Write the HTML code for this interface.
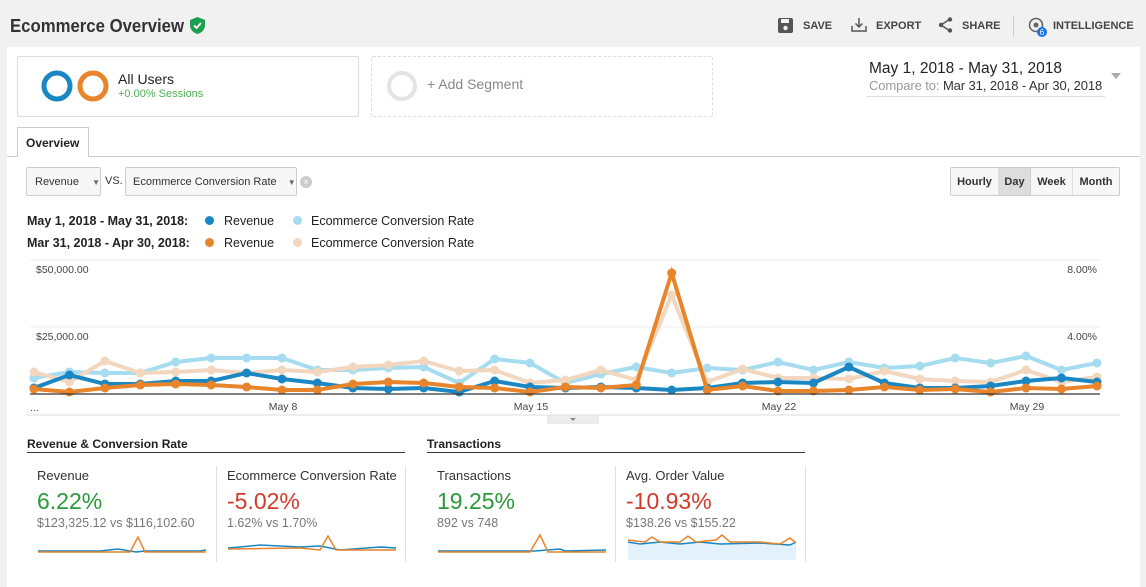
<!DOCTYPE html>
<html><head><meta charset="utf-8"><style>
*{margin:0;padding:0;box-sizing:border-box}
body{width:1146px;height:578px;overflow:hidden;background:#f1f1f1;font-family:"Liberation Sans",Arial,sans-serif;color:#222;position:relative}
.a{position:absolute;white-space:nowrap}
.panel{position:absolute;left:7px;top:47px;width:1133px;height:540px;background:#fff}
.btn{position:absolute;border:1px solid #ccc;background:#f7f7f7;border-radius:2px;font-size:11px;color:#333}
.mv{font-size:13px;color:#333}
.big{font-size:23px}
.sub{font-size:12.5px;color:#777}
</style></head><body>
<div class="a" style="left:10px;top:16px;font-size:18px;font-weight:bold;color:#333;transform:scaleX(0.93);transform-origin:0 0">Ecommerce Overview</div>
<svg class="a" style="left:190px;top:17px" width="15" height="17" viewBox="0 0 15 17"><path d="M7.5 0L15 3v5c0 4.5-3.2 8-7.5 9C3.2 16 0 12.5 0 8V3z" fill="#1e9e50"/><path d="M4 8.5l2.5 2.5 4.5-5" stroke="#fff" stroke-width="1.8" fill="none"/></svg>
<svg class="a" style="left:778px;top:18px" width="15" height="15"><rect x="0" y="0" width="15" height="15" rx="2" fill="#555"/><rect x="3" y="1" width="8" height="4" fill="#f1f1f1"/><circle cx="7.5" cy="10" r="2.2" fill="#f1f1f1"/></svg>
<div class="a" style="left:803px;top:20px;font-size:11px;font-weight:bold;color:#444">SAVE</div>
<svg class="a" style="left:851px;top:17px" width="16" height="16" fill="none" stroke="#555" stroke-width="1.5"><path d="M8 1v9M4.5 6.5L8 10l3.5-3.5M1 9v5h14V9"/></svg>
<div class="a" style="left:876px;top:20px;font-size:11px;font-weight:bold;color:#444">EXPORT</div>
<svg class="a" style="left:938px;top:17px" width="15" height="16"><path d="M12 2L3 8l9 6" stroke="#555" stroke-width="1.5" fill="none"/><circle cx="12" cy="2.5" r="2.2" fill="#555"/><circle cx="3" cy="8" r="2.2" fill="#555"/><circle cx="12" cy="13.5" r="2.2" fill="#555"/></svg>
<div class="a" style="left:962px;top:20px;font-size:11px;font-weight:bold;color:#444">SHARE</div>
<div class="a" style="left:1013px;top:16px;width:1px;height:20px;background:#ccc"></div>
<svg class="a" style="left:1027px;top:16px" width="22" height="22"><circle cx="9" cy="9" r="6.5" stroke="#666" stroke-width="1.6" fill="none"/><circle cx="9" cy="9" r="2.5" fill="#666"/><circle cx="15" cy="16" r="5" fill="#1a73e8"/><text x="15" y="19" font-size="8" fill="#fff" text-anchor="middle" font-family="Liberation Sans">6</text></svg>
<div class="a" style="left:1053px;top:20px;font-size:11px;font-weight:bold;color:#444">INTELLIGENCE</div>

<div class="panel"></div>
<div class="a" style="left:17px;top:56px;width:342px;height:61px;border:1px solid #ddd;border-radius:2px"></div>
<svg class="a" style="left:40px;top:69px" width="70" height="34"><circle cx="17" cy="17" r="13" stroke="#1a87c2" stroke-width="5" fill="none"/><circle cx="53" cy="17" r="13" stroke="#e8842a" stroke-width="5" fill="none"/></svg>
<div class="a" style="left:118px;top:71px;font-size:14px;color:#222">All Users</div>
<div class="a" style="left:118px;top:88px;font-size:11px;color:#4caf50">+0.00% Sessions</div>
<div class="a" style="left:371px;top:56px;width:342px;height:61px;border:1px dashed #ddd;border-radius:2px"></div>
<svg class="a" style="left:386px;top:70px" width="32" height="32"><circle cx="16" cy="16" r="13" stroke="#e4e4e4" stroke-width="4" fill="none"/></svg>
<div class="a" style="left:427px;top:76px;font-size:14px;color:#888">+ Add Segment</div>
<div class="a" style="left:869px;top:60px;font-size:15.5px;color:#222">May 1, 2018 - May 31, 2018</div>
<div class="a" style="left:869px;top:78px;font-size:13px;color:#999;letter-spacing:-0.1px">Compare to: <span style="color:#333">Mar 31, 2018 - Apr 30, 2018</span></div>
<div class="a" style="left:866px;top:96px;width:239px;height:1px;background:#ddd"></div>
<div class="a" style="left:1111px;top:73px;width:0;height:0;border-left:5px solid transparent;border-right:5px solid transparent;border-top:6px solid #aaa"></div>

<div class="a" style="left:7px;top:156px;width:1133px;height:1px;background:#ccc"></div>
<div class="a" style="left:17px;top:127px;width:72px;height:30px;border:1px solid #ccc;border-bottom:none;background:#fff;font-size:12px;font-weight:bold;color:#222;padding:8px 0 0 8px">Overview</div>

<div class="btn" style="left:26px;top:167px;width:75px;height:29px;padding:8px 0 0 8px">Revenue <span style="color:#666;margin-left:10px;font-size:8px">▼</span></div>
<div class="a" style="left:105px;top:175px;font-size:11px;color:#333">VS.</div>
<div class="btn" style="left:125px;top:167px;width:172px;height:29px;padding:8px 0 0 7px">Ecommerce Conversion Rate <span style="color:#666;margin-left:8px;font-size:8px">▼</span></div>
<div class="a" style="left:300px;top:176px;width:12px;height:12px;border-radius:50%;background:#ccc;color:#fff;font-size:9px;text-align:center;line-height:12px">×</div>

<div class="btn" style="left:950px;top:167px;width:170px;height:29px;display:flex;font-weight:bold;background:#f7f7f7">
<div style="width:48px;padding-top:8px;text-align:center;border-right:1px solid #ddd">Hourly</div>
<div style="width:32px;padding-top:8px;text-align:center;background:#ddd;border-right:1px solid #ccc">Day</div>
<div style="width:42px;padding-top:8px;text-align:center;border-right:1px solid #ddd">Week</div>
<div style="width:46px;padding-top:8px;text-align:center">Month</div></div>

<div class="a" style="left:27px;top:214px;font-size:12.5px;font-weight:bold">May 1, 2018 - May 31, 2018:</div>
<div class="a" style="left:205px;top:216px;width:9px;height:9px;border-radius:50%;background:#1a87c2"></div>
<div class="a" style="left:224px;top:214px;font-size:12.5px">Revenue</div>
<div class="a" style="left:293px;top:216px;width:9px;height:9px;border-radius:50%;background:#a6dcf0"></div>
<div class="a" style="left:311px;top:214px;font-size:12.5px">Ecommerce Conversion Rate</div>
<div class="a" style="left:27px;top:236px;font-size:12.5px;font-weight:bold">Mar 31, 2018 - Apr 30, 2018:</div>
<div class="a" style="left:205px;top:238px;width:9px;height:9px;border-radius:50%;background:#e8842a"></div>
<div class="a" style="left:224px;top:236px;font-size:12.5px">Revenue</div>
<div class="a" style="left:293px;top:238px;width:9px;height:9px;border-radius:50%;background:#f2d6bd"></div>
<div class="a" style="left:311px;top:236px;font-size:12.5px">Ecommerce Conversion Rate</div>

<svg class="a" style="left:0;top:0" width="1146" height="578">
<defs>
<marker id="mb" markerUnits="userSpaceOnUse" markerWidth="10" markerHeight="10" refX="5" refY="5"><circle cx="5" cy="5" r="4.5" fill="#1a87c2"/></marker>
<marker id="ml" markerUnits="userSpaceOnUse" markerWidth="10" markerHeight="10" refX="5" refY="5"><circle cx="5" cy="5" r="4.5" fill="#a6dcf0"/></marker>
<marker id="mo" markerUnits="userSpaceOnUse" markerWidth="10" markerHeight="10" refX="5" refY="5"><circle cx="5" cy="5" r="4.5" fill="#e8842a"/></marker>
<marker id="me" markerUnits="userSpaceOnUse" markerWidth="10" markerHeight="10" refX="5" refY="5"><circle cx="5" cy="5" r="4.5" fill="#f2d6bd"/></marker>
</defs>
<line x1="30" y1="260" x2="1100" y2="260" stroke="#eee"/>
<line x1="30" y1="327" x2="1100" y2="327" stroke="#eee"/>
<text x="36" y="273" font-size="10.5" fill="#444" font-family="Liberation Sans">$50,000.00</text>
<text x="36" y="340" font-size="10.5" fill="#444" font-family="Liberation Sans">$25,000.00</text>
<text x="1097" y="273" font-size="10.5" fill="#444" text-anchor="end" font-family="Liberation Sans">8.00%</text>
<text x="1097" y="340" font-size="10.5" fill="#444" text-anchor="end" font-family="Liberation Sans">4.00%</text>
<polyline fill="none" stroke="#a6dcf0" stroke-width="4" marker-start="url(#ml)" marker-mid="url(#ml)" marker-end="url(#ml)" points="34,378 69.4,372 104.9,373 140.3,373 175.7,362 211.2,358 246.6,358 282,358 317.4,370 352.9,370 388.3,368 423.7,367 459.2,383 494.6,359 530,363 565.5,383 600.9,374 636.3,367 671.7,373 707.2,368 742.6,370 778,362 813.5,370 848.9,362 884.3,368 919.8,366 955.2,358 990.6,363 1026,356 1061.5,370 1097,363"/>
<polyline fill="none" stroke="#f2d6bd" stroke-width="4" marker-start="url(#me)" marker-mid="url(#me)" marker-end="url(#me)" points="34,372 69.4,382 104.9,361 140.3,373 175.7,372 211.2,370 246.6,373 282,370 317.4,372 352.9,367 388.3,365 423.7,361 459.2,371 494.6,370 530,383 565.5,380 600.9,370 636.3,380 671.7,295 707.2,382 742.6,369 778,378 813.5,378 848.9,379 884.3,371 919.8,379 955.2,381 990.6,382 1026,370 1061.5,382 1097,377"/>
<polyline fill="none" stroke="#1a87c2" stroke-width="4" marker-start="url(#mb)" marker-mid="url(#mb)" marker-end="url(#mb)" points="34,388 69.4,375 104.9,384 140.3,384 175.7,381 211.2,381 246.6,373 282,379 317.4,383 352.9,388 388.3,389 423.7,388 459.2,392 494.6,381 530,387 565.5,388 600.9,387 636.3,388 671.7,390 707.2,388 742.6,383 778,382 813.5,383 848.9,367 884.3,383 919.8,388 955.2,388 990.6,386 1026,381 1061.5,378 1097,382"/>
<polyline fill="none" stroke="#e8842a" stroke-width="4" marker-start="url(#mo)" marker-mid="url(#mo)" marker-end="url(#mo)" points="34,389 69.4,392 104.9,388 140.3,385 175.7,384 211.2,385 246.6,387 282,390 317.4,390 352.9,384 388.3,382 423.7,383 459.2,387 494.6,388 530,392 565.5,387 600.9,388 636.3,385 671.7,273 707.2,390 742.6,386 778,391 813.5,391 848.9,390 884.3,387 919.8,390 955.2,389 990.6,392 1026,388 1061.5,389 1097,386"/>
<line x1="30" y1="394" x2="1100" y2="394" stroke="#333" stroke-width="1.2"/>
<text x="30" y="411" font-size="10.5" fill="#444" font-family="Liberation Sans">...</text>
<text x="283" y="410" font-size="10.5" fill="#444" text-anchor="middle" font-family="Liberation Sans">May 8</text>
<text x="531" y="410" font-size="10.5" fill="#444" text-anchor="middle" font-family="Liberation Sans">May 15</text>
<text x="779" y="410" font-size="10.5" fill="#444" text-anchor="middle" font-family="Liberation Sans">May 22</text>
<text x="1027" y="410" font-size="10.5" fill="#444" text-anchor="middle" font-family="Liberation Sans">May 29</text>
<line x1="27" y1="415" x2="1120" y2="415" stroke="#ddd"/>
<rect x="548" y="415" width="50" height="8" fill="#eee" stroke="#ddd"/>
<path d="M570 418l3 3 3-3z" fill="#888"/>
</svg>

<div class="a" style="left:27px;top:437px;font-size:12px;font-weight:bold">Revenue &amp; Conversion Rate</div>
<div class="a" style="left:27px;top:452px;width:378px;height:1px;background:#333"></div>
<div class="a" style="left:427px;top:437px;font-size:12px;font-weight:bold">Transactions</div>
<div class="a" style="left:427px;top:452px;width:378px;height:1px;background:#333"></div>
<div class="a" style="left:216px;top:466px;width:1px;height:96px;background:#e0e0e0"></div>
<div class="a" style="left:405px;top:466px;width:1px;height:96px;background:#e0e0e0"></div>
<div class="a" style="left:615px;top:466px;width:1px;height:96px;background:#e0e0e0"></div>
<div class="a" style="left:805px;top:466px;width:1px;height:96px;background:#e0e0e0"></div>

<div class="a mv" style="left:37px;top:468px">Revenue</div>
<div class="a big" style="left:37px;top:488px;color:#2a9a3a">6.22%</div>
<div class="a sub" style="left:37px;top:516px">$123,325.12 vs $116,102.60</div>
<div class="a mv" style="left:227px;top:468px">Ecommerce Conversion Rate</div>
<div class="a big" style="left:227px;top:488px;color:#d2392b">-5.02%</div>
<div class="a sub" style="left:227px;top:516px">1.62% vs 1.70%</div>
<div class="a mv" style="left:437px;top:468px">Transactions</div>
<div class="a big" style="left:437px;top:488px;color:#2a9a3a">19.25%</div>
<div class="a sub" style="left:437px;top:516px">892 vs 748</div>
<div class="a mv" style="left:626px;top:468px">Avg. Order Value</div>
<div class="a big" style="left:626px;top:488px;color:#d2392b">-10.93%</div>
<div class="a sub" style="left:626px;top:516px">$138.26 vs $155.22</div>

<svg class="a" style="left:0;top:530px" width="820" height="30" fill="none" stroke-width="1.5">
<path d="M38 21L100 21L118 19L130 21L136 22L145 21" stroke="#1a87c2"/><path d="M145 21L200 21L206 20" stroke="#1a87c2"/>
<path d="M38 22L130 22L138 7L145 22L206 22" stroke="#e8842a"/>
<path d="M228 18L240 17L260 15L300 17L320 16L340 20L380 17L396 18" stroke="#1a87c2"/>
<path d="M228 19L300 18L320 20L328 6L336 20L396 20" stroke="#e8842a"/>
<path d="M438 21L500 21L520 21L535 21L560 19L565 21L606 20" stroke="#1a87c2"/>
<path d="M438 22L530 22L540 5L548 22L606 22" stroke="#e8842a"/>
<path d="M628 12L640 14L660 12L680 14L700 12L720 14L760 13L790 15L796 12V30H628Z" fill="#e3f1fa" stroke="none"/>
<path d="M628 12L640 14L660 12L680 14L700 12L720 14L760 13L790 15L796 12" stroke="#1a87c2"/>
<path d="M628 10L645 12L652 7L660 12L680 12L688 6L696 12L716 10L722 5L730 12L760 12L780 14L790 8L796 13" stroke="#e8842a"/>
</svg>
</body></html>
